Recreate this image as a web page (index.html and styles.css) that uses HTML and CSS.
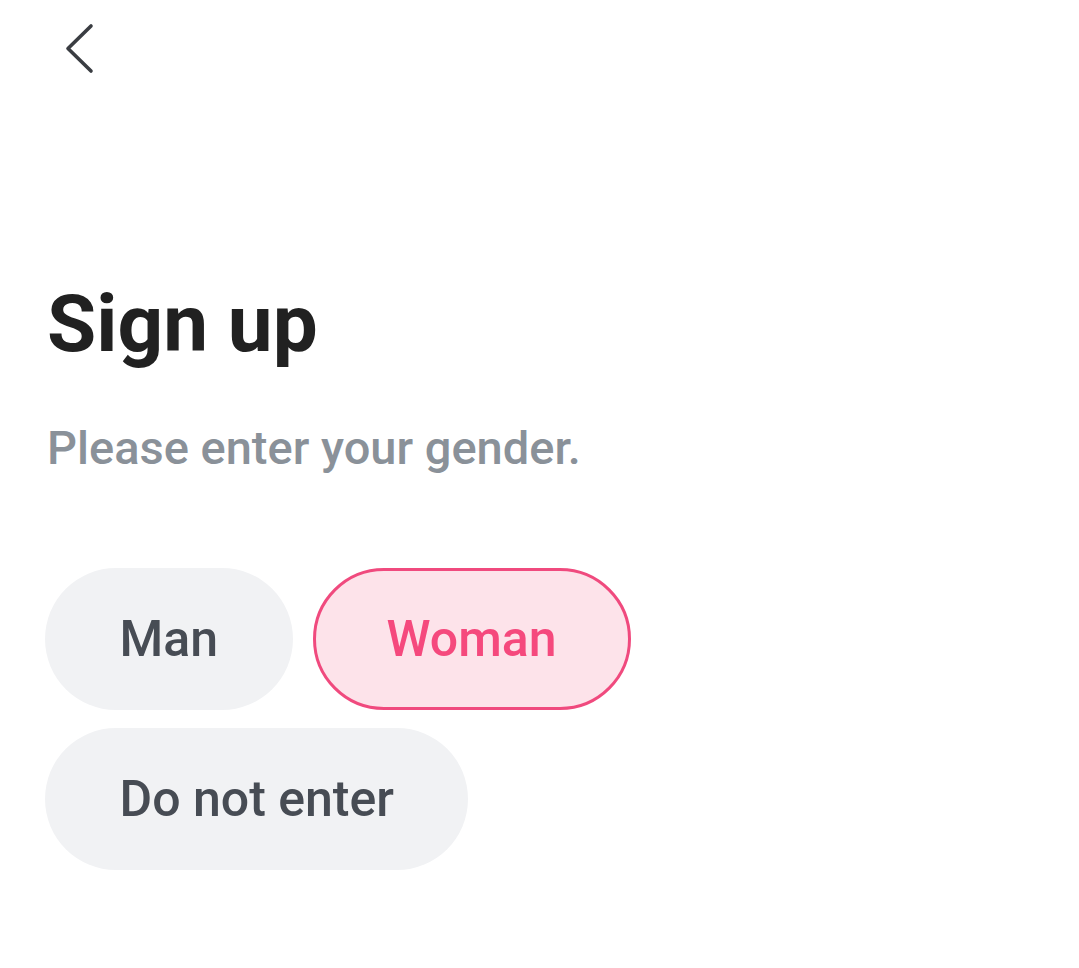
FILE: index.html
```html
<!DOCTYPE html>
<html lang="en">
<head>
    <meta charset="UTF-8">
    <meta name="viewport" content="width=device-width, initial-scale=1.0">
    <title>Sign up</title>
    <link rel="stylesheet" href="styles.css">
</head>
<body>
    <div class="screen">
        <header class="top-bar">
            <button class="back-btn" aria-label="Back">
                <svg width="30" height="52" viewBox="0 0 30 52">
                    <path d="M26 3 L3 25.5 L26 48" fill="none" stroke="#3a3d42" stroke-width="3.6" stroke-linecap="round" stroke-linejoin="round"/>
                </svg>
            </button>
        </header>

        <main class="content">
            <h1 class="title">Sign up</h1>
            <p class="subtitle">Please enter your gender.</p>

            <div class="gender-options">
                <button class="chip">Man</button>
                <button class="chip selected">Woman</button>
                <button class="chip">Do not enter</button>
            </div>
        </main>
    </div>
</body>
</html>
```

FILE: styles.css
```css
body {
    font-family: Roboto, "Noto Sans", Arial, sans-serif;
    background-color: #fff;
    margin: 0;
    padding: 0;
}

.screen {
    padding: 0 45px;
}

.top-bar {
    height: 96px;
    display: flex;
    align-items: flex-start;
}

.back-btn {
    margin: 23px 0 0 20px;
    padding: 0;
    border: none;
    background: none;
    cursor: pointer;
}

.back-btn svg {
    display: block;
}

.content {
    padding-top: 178px;
}

.title {
    margin: 0 0 0 2px;
    font-size: 80px;
    font-weight: 700;
    line-height: 100px;
    color: #212121;
}

.subtitle {
    margin: 46px 0 0 2px;
    font-size: 47px;
    font-weight: 500;
    line-height: 56px;
    color: #8a9199;
}

.gender-options {
    display: flex;
    flex-wrap: wrap;
    gap: 18px 20px;
    margin-top: 92px;
    max-width: 620px;
}

.chip {
    height: 142px;
    padding: 0 74.5px;
    border: none;
    border-radius: 71px;
    background-color: #f1f2f4;
    font-family: inherit;
    font-size: 50px;
    font-weight: 500;
    color: #474c54;
    cursor: pointer;
}

.chip.selected {
    background-color: #fde3ea;
    border: 3px solid #f04a7e;
    padding: 0 71px;
    color: #f5497d;
}
```
